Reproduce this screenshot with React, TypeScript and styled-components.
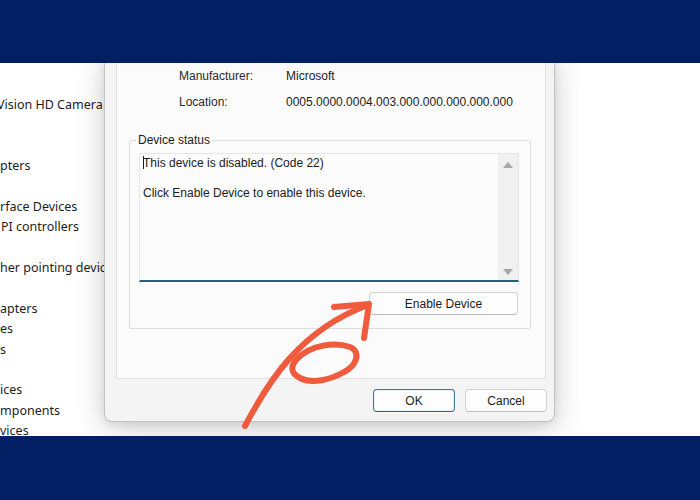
import React from "react";
import styled, { createGlobalStyle } from "styled-components";

const Global = createGlobalStyle`
  html, body { margin: 0; padding: 0; background: #ffffff; }
  #root { width: 700px; height: 500px; overflow: hidden; }
`;

const Page = styled.div`
  width: 700px;
  height: 500px;
  display: flex;
  flex-direction: column;
`;

const Banner = styled.div<{ $h: number }>`
  height: ${(p) => p.$h}px;
  flex: none;
  background: #021f63;
`;

const Desk = styled.div`
  position: relative;
  height: 373px;
  flex: none;
  display: grid;
  grid-template-rows: 373px;
  grid-template-columns: 700px;
  overflow: hidden;
  background: #ffffff;
`;

const TreeList = styled.ul`
  grid-area: 1 / 1;
  list-style: none;
  margin: 0;
  padding: 32px 0 0 0;
  min-height: 0;
  font-family: "Noto Sans", "Open Sans", sans-serif;
  font-size: 12.5px;
  color: #1c1c1c;
`;

const TreeItem = styled.li<{ $shift?: number }>`
  height: 20.375px;
  line-height: 20.375px;
  white-space: nowrap;
  margin-left: ${(p) => p.$shift ?? 0}px;
`;

const Dialog = styled.div`
  grid-area: 1 / 1;
  align-self: stretch;
  justify-self: start;
  margin: -10px 0 14px 104px;
  width: 451px;
  box-sizing: border-box;
  border: 1px solid #c2c2c2;
  border-radius: 8px;
  background: #f4f4f4;
  box-shadow: 0 6px 30px rgba(0, 0, 0, 0.2), 0 2px 8px rgba(0, 0, 0, 0.08);
  display: flex;
  flex-direction: column;
  padding: 0 8px 0 11px;
  font-family: "Liberation Sans", Arial, sans-serif;
  font-size: 12px;
  color: #1b1b1b;
`;

const TabPanel = styled.div`
  flex: 1;
  border: 1px solid #e2e2e2;
  border-top: none;
  background: #fbfbfb;
  padding: 12px 14px 0 12px;
  display: flex;
  flex-direction: column;
`;

const PropRow = styled.div`
  display: grid;
  grid-template-columns: 107px 1fr;
  height: 20px;
  align-items: center;
  margin-left: 50px;
  & + & { margin-top: 6px; }
`;

const PropLabel = styled.span`
  color: #2a2a2a;
`;

const PropValue = styled.span`
  color: #1b1b1b;
`;

const Group = styled.fieldset`
  margin: 21px 0 0 0;
  padding: 6px 11px 13px 9px;
  border: 1px solid #dcdcdc;
  border-radius: 2px;
  display: flex;
  flex-direction: column;
  align-items: stretch;
`;

const GroupTitle = styled.legend`
  padding: 0 2px;
  margin-left: -3px;
  line-height: 14px;
  color: #1b1b1b;
`;

const StatusBox = styled.div`
  height: 129px;
  box-sizing: border-box;
  border: 1px solid #e6e6e6;
  border-bottom: 2px solid #23607f;
  background: #fcfcfc;
  display: flex;
`;

const StatusText = styled.div`
  flex: 1;
  padding: 2px 3px;
  line-height: 15px;
  white-space: pre-wrap;
`;

const Caret = styled.span`
  display: inline-block;
  width: 1px;
  height: 13px;
  background: #1b1b1b;
  vertical-align: -2px;
  margin-right: -1px;
`;

const ScrollTrack = styled.div`
  width: 20px;
  background: #f0f0f0;
  display: flex;
  flex-direction: column;
  justify-content: space-between;
  align-items: center;
  padding: 8px 0 5px;
`;

const ScrollArrow = styled.div<{ $down?: boolean }>`
  width: 0;
  height: 0;
  border-left: 5px solid transparent;
  border-right: 5px solid transparent;
  ${(p) =>
    p.$down
      ? "border-top: 6px solid #a6a6a6;"
      : "border-bottom: 6px solid #a6a6a6;"}
`;

const Button = styled.button<{ $focus?: boolean; $w: number }>`
  width: ${(p) => p.$w}px;
  height: 23px;
  box-sizing: border-box;
  border-radius: 4px;
  border: 1px solid ${(p) => (p.$focus ? "#3c7a95" : "#d2d2d2")};
  border-bottom-color: ${(p) => (p.$focus ? "#2f6880" : "#bdbdbd")};
  background: #fdfdfd;
  font-family: "Liberation Sans", Arial, sans-serif;
  font-size: 12px;
  color: #1b1b1b;
  padding: 0;
  ${(p) => (p.$focus ? "box-shadow: inset 0 0 0 1px #e8f1f5;" : "")}
`;

const GroupActions = styled.div`
  display: flex;
  justify-content: flex-end;
  margin-top: 10px;
  padding-right: 1px;
`;

const Footer = styled.div`
  display: flex;
  justify-content: flex-end;
  gap: 10px;
  padding: 10px 0 9px;
  margin-right: -1px;
`;

const Annotation = styled.svg`
  position: absolute;
  left: 0;
  top: 0;
  width: 700px;
  height: 373px;
  pointer-events: none;
`;

export default function App() {
  return (
    <>
      <Global />
      <Page>
        <Banner $h={63} />
        <Desk>
          <TreeList>
            <TreeItem $shift={-3}>Vision HD Camera</TreeItem>
            <TreeItem />
            <TreeItem />
            <TreeItem>pters</TreeItem>
            <TreeItem />
            <TreeItem>rface Devices</TreeItem>
            <TreeItem $shift={1}>PI controllers</TreeItem>
            <TreeItem />
            <TreeItem>her pointing devices</TreeItem>
            <TreeItem />
            <TreeItem>apters</TreeItem>
            <TreeItem>es</TreeItem>
            <TreeItem>s</TreeItem>
            <TreeItem />
            <TreeItem>ices</TreeItem>
            <TreeItem>mponents</TreeItem>
            <TreeItem>vices</TreeItem>
          </TreeList>
          <Dialog>
            <TabPanel>
              <PropRow>
                <PropLabel>Manufacturer:</PropLabel>
                <PropValue>Microsoft</PropValue>
              </PropRow>
              <PropRow>
                <PropLabel>Location:</PropLabel>
                <PropValue>0005.0000.0004.003.000.000.000.000.000</PropValue>
              </PropRow>
              <Group>
                <GroupTitle>Device status</GroupTitle>
                <StatusBox>
                  <StatusText>
                    <Caret />
                    {"This device is disabled. (Code 22)\n\nClick Enable Device to enable this device."}
                  </StatusText>
                  <ScrollTrack>
                    <ScrollArrow />
                    <ScrollArrow $down />
                  </ScrollTrack>
                </StatusBox>
                <GroupActions>
                  <Button $w={149}>Enable Device</Button>
                </GroupActions>
              </Group>
            </TabPanel>
            <Footer>
              <Button $w={82} $focus>
                OK
              </Button>
              <Button $w={82}>Cancel</Button>
            </Footer>
          </Dialog>
          <Annotation viewBox="0 0 700 373">
            <g
              transform="translate(0,-63)"
              fill="none"
              stroke="#f05b3e"
              strokeWidth={6}
              strokeLinecap="round"
              strokeLinejoin="round"
            >
              <path d="M245,426 C268,382 300,330 368,305" />
              <path d="M334,307 L369,304 L364,338" />
              <path d="M296,360 C310,344 336,342 350,347 C362,352 356,366 344,372 C330,380 312,384 300,378 C290,373 291,366 296,360" />
            </g>
          </Annotation>
        </Desk>
        <Banner $h={64} />
      </Page>
    </>
  );
}
